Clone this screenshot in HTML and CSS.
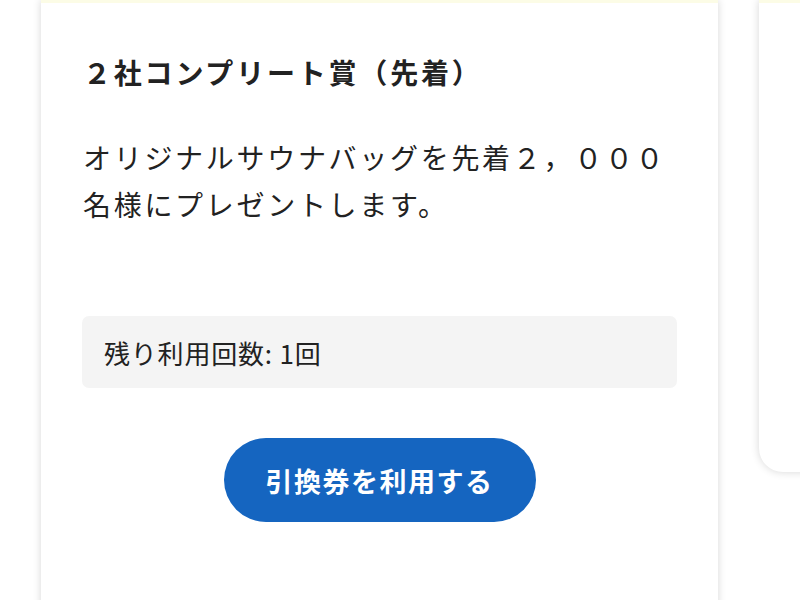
FILE: index.html
```html
<!DOCTYPE html>
<html lang="ja">
<head>
<meta charset="utf-8">
<link rel="stylesheet" href="styles.css">
</head>
<body>
<div class="carousel">
  <section class="card">
    <h2 class="title">２社コンプリート賞（先着）</h2>
    <p class="desc">オリジナルサウナバッグを先着２，０００名様にプレゼントします。</p>
    <div class="remain">残り利用回数: 1回</div>
    <div class="actions">
      <button class="use-btn">引換券を利用する</button>
    </div>
  </section>
  <section class="card card-next"></section>
</div>
</body>
</html>
```

FILE: styles.css
```css
html, body {
  margin: 0;
  padding: 0;
  background: #ffffff;
  overflow: hidden;
}
body {
  font-family: "Noto Sans CJK JP", "Noto Sans", sans-serif;
  color: #222222;
}
.carousel {
  display: flex;
  align-items: flex-start;
  gap: 41px;
  padding-left: 41px;
  width: 1600px;
}
.card {
  flex: none;
  box-sizing: border-box;
  width: 677px;
  height: 700px;
  background: #ffffff;
  border-top: 3px solid #fcfce6;
  box-shadow: 0 0 8px rgba(0, 0, 0, 0.16);
  padding: 49px 41px 0 41px;
}
.card-next {
  height: 472px;
  border-bottom-left-radius: 24px;
}
.title {
  margin: 0;
  font-size: 28px;
  font-weight: 700;
  line-height: 40px;
  letter-spacing: 2.8px;
  padding-left: 1px;
}
.desc {
  margin: 42px 0 0 0;
  font-size: 28px;
  font-weight: 400;
  line-height: 47px;
  letter-spacing: 2.7px;
  padding-left: 1px;
  color: #222222;
}
.remain {
  margin-top: 88px;
  height: 72px;
  box-sizing: border-box;
  background: #f4f4f4;
  border-radius: 7px;
  padding: 0 22px;
  display: flex;
  align-items: center;
  font-size: 26px;
  letter-spacing: 0.8px;
  color: #222222;
}
.actions {
  display: flex;
  justify-content: center;
  margin-top: 50px;
}
.use-btn {
  width: 312px;
  height: 84px;
  border: none;
  border-radius: 42px;
  background: #1565c0;
  color: #ffffff;
  font-family: "Noto Sans CJK JP", "Noto Sans", sans-serif;
  font-size: 27px;
  font-weight: 700;
  letter-spacing: 1.5px;
  padding: 0;
}
```
